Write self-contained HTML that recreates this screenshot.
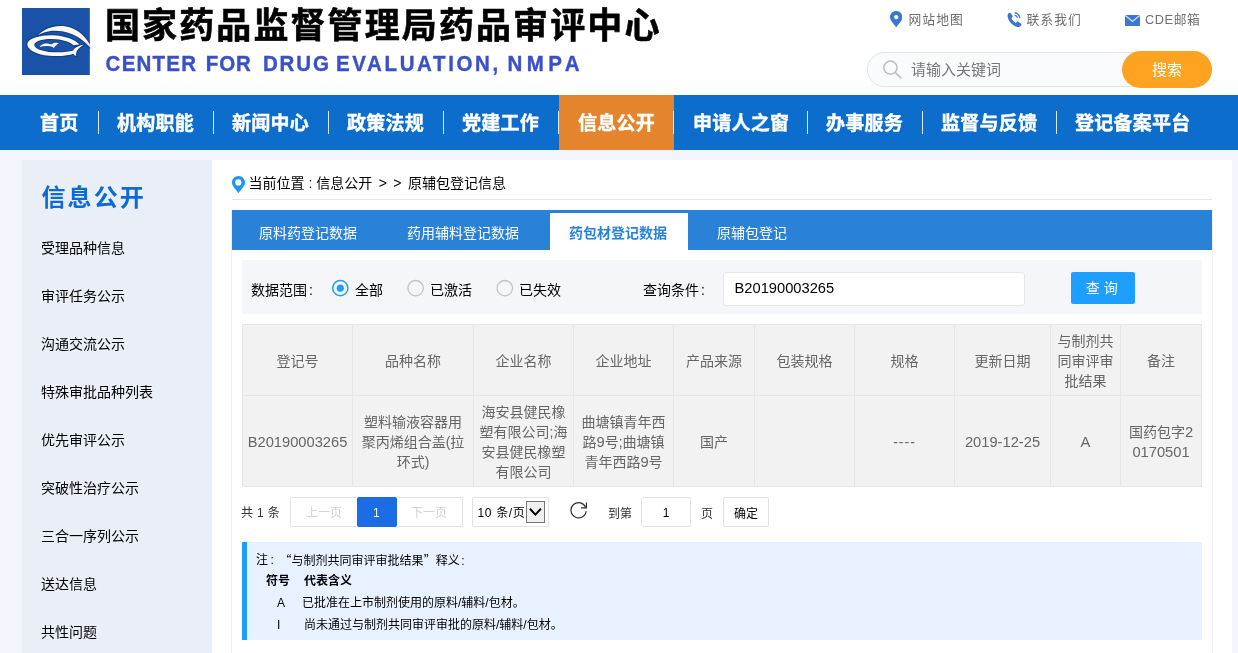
<!DOCTYPE html>
<html lang="zh-CN">
<head>
<meta charset="utf-8">
<title>原辅包登记信息</title>
<style>
*{box-sizing:border-box;margin:0;padding:0}
html,body{width:1238px;height:653px;overflow:hidden;background:#f2f6fc}
body{font-family:"Liberation Sans","Noto Sans CJK SC",sans-serif;color:#000;position:relative}
#wrap{position:absolute;left:0;top:0;width:1238px;height:653px;overflow:hidden;will-change:transform;transform:translateZ(0)}
.abs{position:absolute}
#header{position:absolute;left:0;top:0;width:1238px;height:95px;background:#fff}
#title{-webkit-text-stroke:0.600px #000;position:absolute;left:105px;top:2px;font-size:35px;font-weight:bold;letter-spacing:2.1px;line-height:48px;color:#000;white-space:nowrap}
#etitle{-webkit-text-stroke:0.350px #3a50c8;transform:scaleY(1.074);transform-origin:0 9.900px;position:absolute;left:0;top:50px;font-size:20.500px;font-weight:bold;line-height:26px;color:#3a50c8;white-space:nowrap}
#etitle span{position:absolute;top:0}
.toplink{position:absolute;top:10.500px;font-size:12.800px;letter-spacing:0.450px;line-height:18px;color:#707070;white-space:nowrap}
#search{position:absolute;left:867px;top:52px;width:345px;height:35px;border:1px solid #e3e3e3;border-radius:18px;background:#fafbfc}
#search span{position:absolute;left:43px;top:6px;font-size:15px;line-height:22px;color:#777}
#sbtn{position:absolute;left:1122px;top:51px;width:90px;height:37px;border-radius:19px;background:#fda221;color:#fff;font-size:15px;line-height:37px;text-align:center}
#nav{position:absolute;left:0;top:95px;width:1238px;height:55px;background:#0c6dcd}
.nv{position:absolute;top:0;height:55px;line-height:57px;font-size:19px;font-weight:bold;color:#fff;white-space:nowrap;text-align:center;-webkit-text-stroke:0.400px #fff;letter-spacing:0.250px}
.sep{position:absolute;top:16px;width:1px;height:23px;background:#dbe8f7}
#side{position:absolute;left:22px;top:160px;width:190px;height:493px;background:#e9eef7}
#side h2{position:absolute;left:19.500px;top:19.500px;font-size:24px;line-height:36px;font-weight:bold;color:#0d6ad6;letter-spacing:2.100px;white-space:nowrap}
.si{position:absolute;left:19px;font-size:14px;line-height:20px;color:#000;white-space:nowrap}
#main{position:absolute;left:212px;top:160px;width:1020px;height:493px;background:#fff}
#vl,#vr{position:absolute;top:210px;width:1px;height:443px;background:#edf1f7}
#vl{left:231px}#vr{left:1212px}
#bc{position:absolute;left:248.500px;top:173px;font-size:14px;line-height:20px;color:#000;white-space:nowrap}
#bcline{position:absolute;left:232px;top:199px;width:980px;height:1px;background:#e6e6e6}
#tabs{position:absolute;left:232px;top:210px;width:980px;height:40px;background:#2a82d8}
.tb{position:absolute;top:0;height:40px;line-height:46px;font-size:14px;color:#fff;white-space:nowrap}
#tbact{position:absolute;left:318px;top:3px;width:138px;height:37px;background:#fff}
#filter{position:absolute;left:242px;top:260px;width:960px;height:54px;background:#f5f6fa}
.ft{position:absolute;font-size:14px;line-height:20px;color:#000;white-space:nowrap}
.rd{position:absolute;width:16px;height:16px;border-radius:50%;border:1px solid #c2c2c2;background:#fff}
.rd.on{border:1.5px solid #1e8ff5}
.rd.on i{position:absolute;left:3.5px;top:3.5px;width:6px;height:6px;border-radius:50%;background:#1e8ff5}
#qin{position:absolute;left:723px;top:272px;width:302px;height:34px;border:1px solid #e6e6e6;border-radius:3px;background:#fff;font-size:14.700px;line-height:31.500px;padding-left:10.500px;color:#000}
#qbtn{position:absolute;left:1071px;top:272px;width:64px;height:32px;border-radius:2px;background:#1e9fff;color:#fff;font-size:14px;line-height:33.500px;text-align:center;padding-right:2.500px}
#tbl{position:absolute;left:242px;top:324px;width:959px;border-collapse:collapse;table-layout:fixed;background:#f2f2f2;font-size:14px;line-height:20px;color:#666;text-align:center}
#tbl td,#tbl th{border:1px solid #e6e6e6;font-weight:normal;padding:1px 4px 0;vertical-align:middle;word-break:break-all}
#tbl th{height:71px}#tbl td{height:91px}
.num{font-size:14.700px;letter-spacing:0}
.pg{position:absolute;font-size:12px;line-height:18px;white-space:nowrap;color:#333}
.pb{position:absolute;top:497px;height:30px;border:1px solid #e2e2e2;background:#fff;font-size:12px;line-height:30px;text-align:center;color:#d2d2d2}
#note{position:absolute;left:242px;top:542px;width:960px;height:98px;background:#e8f1ff;border-left:5px solid #1e9fff}
.q{font-family:"Noto Sans CJK SC",sans-serif}
.nt{position:absolute;font-size:12px;line-height:18px;color:#000;white-space:nowrap}
</style>
</head>
<body>
<div id="wrap">
<div id="header">
  <svg id="logo" width="80" height="67" viewBox="0 0 80 67" style="position:absolute;left:22px;top:8px;overflow:visible">
    <defs><linearGradient id="lg" gradientUnits="userSpaceOnUse" x1="64" y1="34" x2="74" y2="46"><stop offset="0" stop-color="#fdfaf2"/><stop offset="0.350" stop-color="#d5e0f3" stop-opacity="1"/><stop offset="1" stop-color="#dfe8f6" stop-opacity="0.250"/></linearGradient>
    <clipPath id="lc"><rect x="0" y="0" width="67.800" height="67"/></clipPath></defs>
    <rect x="0" y="0" width="67.800" height="67" fill="#1a52a7"/>
    <g clip-path="url(#lc)" fill="none" stroke="#0f3a8c" stroke-width="2.200" stroke-linejoin="round" opacity="0.850">
      <path d="M16 27.200C23 19.500 37 15.300 49 19.800c9.500 3.600 15.500 10.700 19.500 17.700 1.800 3.200 3.300 6 4.700 8.300C69.500 41 65.500 36 59.500 31.500 51.500 25.300 40 22 30 22.800c-6 0.500-10.500 2.600-14 4.400z"/>
      <path d="M57.500 36.600C54 32 43 27.500 30.500 27.200 17 27 5.500 30.500 5.300 36c-0.200 6 10.200 11.500 25.200 12 9 0.300 17.500-0.800 22.500-2.800l-1.500-2.700C47 44 39 44.500 31 44.200 20 43.700 12.500 40.500 12.300 37c-0.200-3.400 7.200-6.200 18.200-6 9.500 0.200 17.500 2.800 21 6.300z"/>
      <path d="M61.500 36.800c-4.500 0.800-9 2.700-10.500 6.200-0.800 2.300 0.800 4.200 3.300 5-0.800-2.800 0.300-5.500 2.500-7.500 1.500-1.500 3.200-2.700 4.700-3.700z"/>
    </g>
    <g fill="#fdfaf2">
      <path fill="url(#lg)" d="M16 27.200C23 19.500 37 15.300 49 19.800c9.500 3.600 15.500 10.700 19.500 17.700 1.800 3.200 3.300 6 4.700 8.300C69.500 41 65.500 36 59.500 31.500 51.500 25.300 40 22 30 22.800c-6 0.500-10.500 2.600-14 4.400z"/>
      <path fill-rule="evenodd" d="M57.500 36.600C54 32 43 27.500 30.500 27.200 17 27 5.500 30.500 5.300 36c-0.200 6 10.200 11.500 25.200 12 9 0.300 17.500-0.800 22.500-2.800l-1.500-2.700C47 44 39 44.500 31 44.200 20 43.700 12.500 40.500 12.300 37c-0.200-3.400 7.200-6.200 18.200-6 9.500 0.200 17.500 2.800 21 6.300z"/>
      <path d="M61.500 36.800c-4.500 0.800-9 2.700-10.500 6.200-0.800 2.300 0.800 4.200 3.300 5-0.800-2.800 0.300-5.500 2.500-7.500 1.500-1.500 3.200-2.700 4.700-3.700z"/>
      <path d="M17.600 39c1.300-2.800 4.800-4 7.600-3.500 2 0.400 3.800 1 5 0.500 1.700-1.300 4.300-1.600 6.800-0.700-2 1-3.700 2.500-5.200 4.700-1.500-1.200-3.500-1.800-5.500-1.900-3-0.200-6.200 0.100-8.700 0.900z"/>
    </g>
  </svg>
  <div id="title">国家药品监督管理局药品审评中心</div>
  <div id="etitle"><span style="left:105.600px;letter-spacing:1.230px">CENTER</span> <span style="left:205.700px;letter-spacing:0.980px">FOR</span> <span style="left:262.900px;letter-spacing:1.900px">DRUG</span> <span style="left:336px;letter-spacing:2.630px">EVALUATION,</span> <span style="left:507.500px;letter-spacing:4.400px">NMPA</span></div>
  <svg class="abs" style="left:890px;top:10.800px" width="12.400" height="16.400" viewBox="0 0 12.400 16.400"><path d="M6.200 0C2.800 0 0 2.700 0 6.100c0 3.800 3.900 6.800 6.200 10.200 2.300-3.400 6.200-6.400 6.200-10.200C12.400 2.700 9.600 0 6.200 0z" fill="#3a78cf"/><circle cx="6.200" cy="6.100" r="2.200" fill="#fff"/></svg>
  <svg class="abs" style="left:1006.700px;top:11.600px" width="16" height="16" viewBox="0 0 17 17"><path d="M1.300 1.600C2.300 0.600 3.300 0.500 4 1.400l1.700 2.300c0.500 0.800 0.300 1.500-0.300 2.100l-0.800 0.800c1 2 2.600 3.700 4.800 5l0.900-0.900c0.600-0.600 1.400-0.700 2.100-0.200l2.300 1.600c0.900 0.700 0.900 1.600 0 2.500-1.100 1.200-2.600 1.800-4.400 1.200C5.800 14.300 1.900 10.300 0.800 5.600 0.400 4 0.600 2.500 1.300 1.600z" fill="#3a78cf"/><path d="M8.300 3.400c1.500 0.200 2.500 1.200 2.700 2.700M8.400 0.900c2.800 0.300 4.800 2.300 5.100 5.100" fill="none" stroke="#3a78cf" stroke-width="1.200" stroke-linecap="round"/></svg>
  <svg class="abs" style="left:1125px;top:15px" width="15" height="11" viewBox="0 0 15 11"><rect width="15" height="11" fill="#3a78cf"/><path d="M0.300 0.500L7.500 6.500 14.700 0.500" fill="none" stroke="#d4e2f6" stroke-width="1.300"/></svg>
  <div class="toplink" style="left:908.500px;letter-spacing:1.050px">网站地图</div>
  <div class="toplink" style="left:1026.500px;letter-spacing:1.050px">联系我们</div>
  <div class="toplink" style="left:1145px;letter-spacing:0.550px">CDE邮箱</div>
  <div id="search"><span>请输入关键词</span></div>
  <svg class="abs" style="left:882px;top:59px" width="22" height="22" viewBox="0 0 22 22"><circle cx="8.400" cy="8.600" r="6.600" fill="none" stroke="#bbbdbb" stroke-width="1.500"/><path d="M13.600 13.800l5.400 5.200" stroke="#bbbdbb" stroke-width="1.600" stroke-linecap="round"/></svg>
  <div id="sbtn">搜索</div>
</div>
<div id="nav">
  <div class="nv" style="left:40px">首页</div>
  <div class="nv" style="left:117px">机构职能</div>
  <div class="nv" style="left:232px">新闻中心</div>
  <div class="nv" style="left:347px">政策法规</div>
  <div class="nv" style="left:462px">党建工作</div>
  <div class="nv" style="left:559px;width:115px;background:#e4842c">信息公开</div>
  <div class="nv" style="left:693px">申请人之窗</div>
  <div class="nv" style="left:826px">办事服务</div>
  <div class="nv" style="left:941px">监督与反馈</div>
  <div class="nv" style="left:1075px">登记备案平台</div>
  <div class="sep" style="left:98px"></div>
  <div class="sep" style="left:213px"></div>
  <div class="sep" style="left:328px"></div>
  <div class="sep" style="left:443px"></div>
  <div class="sep" style="left:558px"></div>
  <div class="sep" style="left:673px"></div>
  <div class="sep" style="left:807px"></div>
  <div class="sep" style="left:922px"></div>
  <div class="sep" style="left:1056px"></div>
</div>
<div id="side">
  <h2>信息公开</h2>
  <div class="si" style="top:78px">受理品种信息</div>
  <div class="si" style="top:126px">审评任务公示</div>
  <div class="si" style="top:174px">沟通交流公示</div>
  <div class="si" style="top:222px">特殊审批品种列表</div>
  <div class="si" style="top:270px">优先审评公示</div>
  <div class="si" style="top:318px">突破性治疗公示</div>
  <div class="si" style="top:366px">三合一序列公示</div>
  <div class="si" style="top:414px">送达信息</div>
  <div class="si" style="top:462px">共性问题</div>
</div>
<div id="main"></div>
<div id="vl"></div><div id="vr"></div>
<svg class="abs" style="left:232px;top:175.800px" width="13" height="17.400" viewBox="0 0 13 17.400"><path d="M6.500 0C2.900 0 0 2.900 0 6.500c0 4.200 4.300 7.300 6.400 10.700C8.500 13.800 13 10.700 13 6.500 13 2.900 10.100 0 6.500 0z" fill="#1e96f5"/><circle cx="6.300" cy="6.400" r="3.100" fill="#fff"/></svg>
<div id="bc">当前位置 : 信息公开<span style="word-spacing:2.6px"> &gt; &gt; </span>原辅包登记信息</div>
<div id="bcline"></div>
<div id="tabs">
  <div id="tbact"></div>
  <div class="tb" style="left:27px">原料药登记数据</div>
  <div class="tb" style="left:175px">药用辅料登记数据</div>
  <div class="tb" style="left:337px;color:#2a82d8;font-weight:bold">药包材登记数据</div>
  <div class="tb" style="left:485px">原辅包登记</div>
</div>
<div id="filter"></div>
<div class="ft" style="left:251px;top:280px">数据范围<span style="margin-left:2px">:</span></div>
<svg class="abs" style="left:331px;top:279px" width="19" height="19" viewBox="0 0 19 19"><circle cx="9.300" cy="9.200" r="7.600" fill="none" stroke="#1e9fff" stroke-width="1.500"/><circle cx="9.300" cy="9.200" r="3.600" fill="#1e9fff"/></svg>
<div class="ft" style="left:355px;top:280px">全部</div>
<svg class="abs" style="left:406px;top:279px" width="19" height="19" viewBox="0 0 19 19"><circle cx="9.600" cy="9.200" r="7.700" fill="none" stroke="#c2c2c2" stroke-width="1.300"/></svg>
<div class="ft" style="left:430px;top:280px">已激活</div>
<svg class="abs" style="left:495px;top:279px" width="19" height="19" viewBox="0 0 19 19"><circle cx="9.800" cy="9.200" r="7.700" fill="none" stroke="#c2c2c2" stroke-width="1.300"/></svg>
<div class="ft" style="left:519px;top:280px">已失效</div>
<div class="ft" style="left:643px;top:280px">查询条件<span style="margin-left:2px">:</span></div>
<div id="qin">B20190003265</div>
<div id="qbtn">查 询</div>
<table id="tbl">
<colgroup><col style="width:110px"><col style="width:121px"><col style="width:100px"><col style="width:100px"><col style="width:81px"><col style="width:100px"><col style="width:100px"><col style="width:96px"><col style="width:70px"><col style="width:81px"></colgroup>
<tr><th>登记号</th><th>品种名称</th><th>企业名称</th><th>企业地址</th><th>产品来源</th><th>包装规格</th><th>规格</th><th>更新日期</th><th>与制剂共<br>同审评审<br>批结果</th><th>备注</th></tr>
<tr><td class="num">B20190003265</td><td>塑料输液容器用<br>聚丙烯组合盖(拉<br>环式)</td><td>海安县健民橡<br>塑有限公司;海<br>安县健民橡塑<br>有限公司</td><td>曲塘镇青年西<br>路<span class="num">9</span>号;曲塘镇<br>青年西路<span class="num">9</span>号</td><td>国产</td><td></td><td style="letter-spacing:1px">----</td><td class="num">2019-12-25</td><td class="num">A</td><td>国药包字<span class="num">2</span><br><span class="num">0170501</span></td></tr>
</table>
<div class="pg" style="left:241px;top:504px;word-spacing:0.700px">共 1 条</div>
<div class="pb" style="left:290px;width:68px;border-radius:1px 0 0 1px">上一页</div>
<div class="pb" style="left:357px;width:39px;background:#1c6ce4;border-color:#1c6ce4;color:#fff;padding-right:1px;border-radius:2px;z-index:2;width:39.500px">1</div>
<div class="pb" style="left:395px;width:68px;border-radius:0 1px 1px 0">下一页</div>
<div class="pb" style="left:472px;width:77px;border-radius:2px;text-align:left;padding-left:4.500px;letter-spacing:0.650px;color:#000">10 条/页</div>
<div class="abs" style="left:526px;top:501px;width:19px;height:22px;border:1px solid #767676;background:#efefef"></div>
<svg class="abs" style="left:526px;top:501px" width="19" height="22" viewBox="0 0 19 22"><path d="M3.900 7.700L9.400 13.600 14.900 7.700" fill="none" stroke="#000" stroke-width="2"/></svg>
<svg class="abs" style="left:569px;top:501px" width="20" height="20" viewBox="0 0 20 20"><path d="M16.700 6.500A7.600 7.600 0 1 0 17.150 10.100" fill="none" stroke="#2e2e2e" stroke-width="1.200"/><path d="M17.450 1.400V6.900H12" fill="none" stroke="#2e2e2e" stroke-width="1.200"/></svg>
<div class="pg" style="left:608px;top:504.500px">到第</div>
<div class="pb" style="left:641px;width:50px;border-radius:2px;color:#000">1</div>
<div class="pg" style="left:701px;top:504.500px">页</div>
<div class="pb" style="left:723px;width:46px;border-radius:2px;color:#000;line-height:32px">确定</div>
<div id="note"></div>
<div class="nt" style="left:256px;top:551px">注<span style="margin-left:2.500px">:</span></div>
<div class="nt" style="left:279.600px;top:551px"><span class="q">“</span>与制剂共同审评审批结果<span class="q">”</span>释义<span style="margin-left:1.500px">:</span></div>
<div class="nt" style="left:266px;top:572px;font-weight:bold">符号</div>
<div class="nt" style="left:304px;top:572px;font-weight:bold">代表含义</div>
<div class="nt" style="left:277px;top:594px">A</div>
<div class="nt" style="left:302px;top:594px">已批准在上市制剂使用的原料/辅料/包材。</div>
<div class="nt" style="left:277px;top:616px">I</div>
<div class="nt" style="left:304px;top:616px">尚未通过与制剂共同审评审批的原料/辅料/包材。</div>
</div>
</body>
</html>
